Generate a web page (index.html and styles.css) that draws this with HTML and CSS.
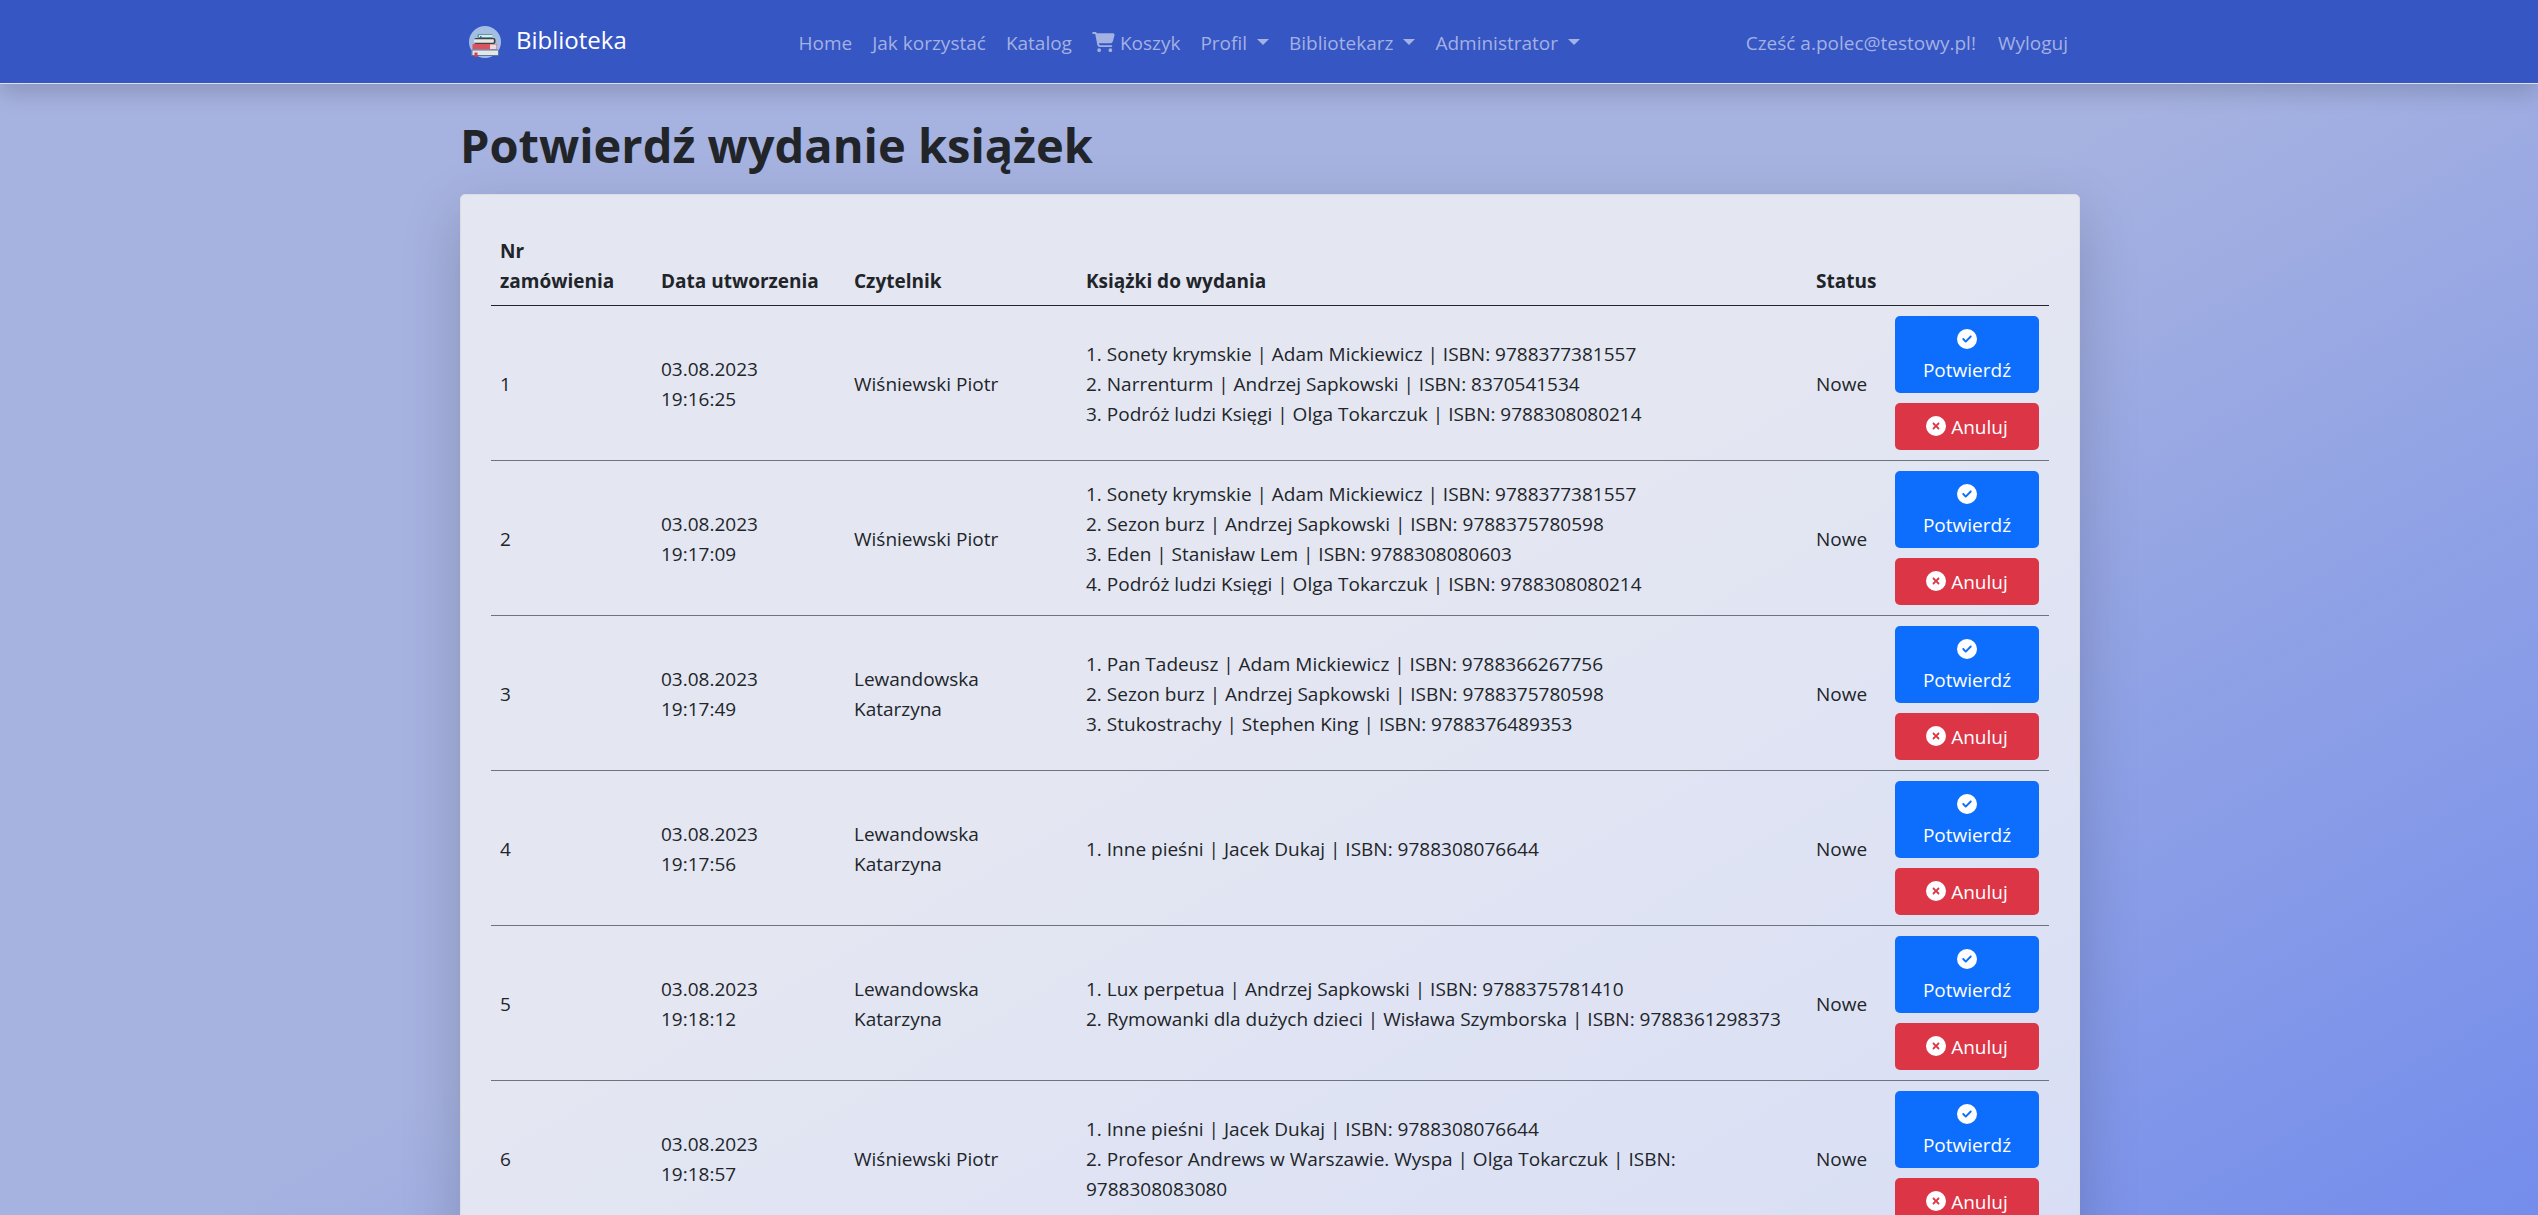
FILE: index.html
```html
<!DOCTYPE html>
<html lang="pl">
<head>
<meta charset="utf-8">
<title>Potwierdź wydanie książek - Biblioteka</title>
<link rel="stylesheet" href="styles.css">
</head>
<body>
<svg class="sprite" aria-hidden="true">
  <symbol id="check" viewBox="0 0 512 512"><path d="M256 512A256 256 0 1 0 256 0a256 256 0 1 0 0 512zM369 209L241 337c-9.400 9.400-24.600 9.400-33.900 0l-64-64c-9.400-9.400-9.400-24.600 0-33.900s24.600-9.400 33.900 0l47 47L335 175c9.400-9.400 24.600-9.400 33.900 0s9.400 24.600 0 33.900z"/></symbol>
  <symbol id="cross" viewBox="0 0 512 512"><path d="M256 512A256 256 0 1 0 256 0a256 256 0 1 0 0 512zM175 175c9.400-9.400 24.600-9.400 33.900 0l47 47 47-47c9.400-9.400 24.600-9.400 33.900 0s9.400 24.600 0 33.900l-47 47 47 47c9.400 9.400 9.400 24.600 0 33.900s-24.600 9.400-33.900 0l-47-47-47 47c-9.400 9.400-24.600 9.400-33.900 0s-9.400-24.600 0-33.900l47-47-47-47c-9.400-9.400-9.400-24.600 0-33.900z"/></symbol>
</svg>
<header class="topbar">
  <nav class="container navbar">
    <a class="brand" href="#">
      <svg class="logo" viewBox="0 0 34 34" aria-hidden="true">
        <circle cx="17" cy="17" r="16" fill="#a4bde2"/>
        <rect x="9.500" y="9" width="15" height="4" rx="1" fill="#5b9a9c"/><path d="M11 10h13.500v2H11z" fill="#dfe8e8"/><path d="M12 11h1.500v3H12z" fill="#2f6fb0"/>
        <rect x="6" y="13" width="21.500" height="6" rx="2" fill="#3f4347"/><path d="M6 14.200h19.500q1 1.800 0 3.600H6z" fill="#e6e6e6"/>
        <path d="M4.500 19H29v5.500H4.500z" fill="#d9545f"/><path d="M22 19.500h6.500v4.500H22z" fill="#e9dcdc"/>
        <rect x="3" y="24.500" width="28" height="6.500" rx="1.500" fill="#5779a5"/><path d="M4.500 25.500H30v4.500H4.500z" fill="#e6e6e6"/>
        <path d="M6.500 27.500h3v5l-1.500-1-1.500 1z" fill="#cf3f4d"/>
      </svg>
      <span class="brand-name">Biblioteka</span>
    </a>
    <ul class="menu">
      <li><a href="#">Home</a></li>
      <li><a href="#">Jak korzystać</a></li>
      <li><a href="#">Katalog</a></li>
      <li><a href="#"><svg class="cart" viewBox="0 0 576 512" aria-hidden="true"><path d="M0 24C0 10.700 10.700 0 24 0h45.500c22 0 41.500 12.800 50.600 32h411c26.300 0 45.500 25 38.600 50.400l-41 152.300c-8.500 31.400-37 53.300-69.500 53.300H170.700l5.400 28.500c2.200 11.300 12.100 19.500 23.600 19.500H488c13.300 0 24 10.700 24 24s-10.700 24-24 24H199.700c-34.600 0-64.300-24.600-70.700-58.500L77.400 54.500c-.7-3.800-4-6.500-7.900-6.500H24C10.700 48 0 37.300 0 24zM128 464a48 48 0 1 1 96 0 48 48 0 1 1-96 0zm336-48a48 48 0 1 1 0 96 48 48 0 1 1 0-96z"/></svg> Koszyk</a></li>
      <li><a class="dropdown" href="#">Profil</a></li>
      <li><a class="dropdown" href="#">Bibliotekarz</a></li>
      <li><a class="dropdown" href="#">Administrator</a></li>
    </ul>
    <ul class="menu account">
      <li><a href="#">Cześć a.polec@testowy.pl!</a></li>
      <li><a href="#">Wyloguj</a></li>
    </ul>
  </nav>
</header>
<main class="container">
  <h1>Potwierdź wydanie książek</h1>
  <section class="card">
    <table class="orders">
      <colgroup><col class="c-nr"><col class="c-date"><col class="c-reader"><col><col class="c-status"><col class="c-actions"></colgroup>
      <thead>
        <tr><th>Nr zamówienia</th><th>Data utworzenia</th><th>Czytelnik</th><th>Książki do wydania</th><th>Status</th><th></th></tr>
      </thead>
      <tbody>
        <tr><td>1</td><td>03.08.2023 19:16:25</td><td>Wiśniewski Piotr</td>
          <td>1. Sonety krymskie | Adam Mickiewicz | ISBN: 9788377381557<br>2. Narrenturm | Andrzej Sapkowski | ISBN: 8370541534<br>3. Podróż ludzi Księgi | Olga Tokarczuk | ISBN: 9788308080214</td>
          <td>Nowe</td>
          <td><div class="actions"><button class="btn confirm"><svg class="icon"><use href="#check"/></svg> Potwierdź</button><button class="btn cancel"><svg class="icon"><use href="#cross"/></svg> Anuluj</button></div></td></tr>
        <tr><td>2</td><td>03.08.2023 19:17:09</td><td>Wiśniewski Piotr</td>
          <td>1. Sonety krymskie | Adam Mickiewicz | ISBN: 9788377381557<br>2. Sezon burz | Andrzej Sapkowski | ISBN: 9788375780598<br>3. Eden | Stanisław Lem | ISBN: 9788308080603<br>4. Podróż ludzi Księgi | Olga Tokarczuk | ISBN: 9788308080214</td>
          <td>Nowe</td>
          <td><div class="actions"><button class="btn confirm"><svg class="icon"><use href="#check"/></svg> Potwierdź</button><button class="btn cancel"><svg class="icon"><use href="#cross"/></svg> Anuluj</button></div></td></tr>
        <tr><td>3</td><td>03.08.2023 19:17:49</td><td>Lewandowska Katarzyna</td>
          <td>1. Pan Tadeusz | Adam Mickiewicz | ISBN: 9788366267756<br>2. Sezon burz | Andrzej Sapkowski | ISBN: 9788375780598<br>3. Stukostrachy | Stephen King | ISBN: 9788376489353</td>
          <td>Nowe</td>
          <td><div class="actions"><button class="btn confirm"><svg class="icon"><use href="#check"/></svg> Potwierdź</button><button class="btn cancel"><svg class="icon"><use href="#cross"/></svg> Anuluj</button></div></td></tr>
        <tr><td>4</td><td>03.08.2023 19:17:56</td><td>Lewandowska Katarzyna</td>
          <td>1. Inne pieśni | Jacek Dukaj | ISBN: 9788308076644</td>
          <td>Nowe</td>
          <td><div class="actions"><button class="btn confirm"><svg class="icon"><use href="#check"/></svg> Potwierdź</button><button class="btn cancel"><svg class="icon"><use href="#cross"/></svg> Anuluj</button></div></td></tr>
        <tr><td>5</td><td>03.08.2023 19:18:12</td><td>Lewandowska Katarzyna</td>
          <td>1. Lux perpetua | Andrzej Sapkowski | ISBN: 9788375781410<br>2. Rymowanki dla dużych dzieci | Wisława Szymborska | ISBN: 9788361298373</td>
          <td>Nowe</td>
          <td><div class="actions"><button class="btn confirm"><svg class="icon"><use href="#check"/></svg> Potwierdź</button><button class="btn cancel"><svg class="icon"><use href="#cross"/></svg> Anuluj</button></div></td></tr>
        <tr><td>6</td><td>03.08.2023 19:18:57</td><td>Wiśniewski Piotr</td>
          <td>1. Inne pieśni | Jacek Dukaj | ISBN: 9788308076644<br>2. Profesor Andrews w Warszawie. Wyspa | Olga Tokarczuk | ISBN: 9788308083080</td>
          <td>Nowe</td>
          <td><div class="actions"><button class="btn confirm"><svg class="icon"><use href="#check"/></svg> Potwierdź</button><button class="btn cancel"><svg class="icon"><use href="#cross"/></svg> Anuluj</button></div></td></tr>
      </tbody>
    </table>
  </section>
</main>
</body>
</html>
```
FILE: styles.css
```css
* { box-sizing: border-box; }
html { scrollbar-width: none; }
body {
  margin: 0;
  font: 19px/30px "Segoe UI", "Open Sans", "Noto Sans", sans-serif;
  color: #212529;
  background: linear-gradient(150deg, #a6b2e0 50%, #748dec) fixed;
}
.sprite { display: none; }
.container { max-width: 1650px; margin: 0 auto; padding: 0 14px 0 16px; }
.topbar {
  background: #3656c3;
  border-bottom: 1px solid #dee2e6;
  box-shadow: 0 10px 20px rgba(0, 0, 0, 0.15);
}
.navbar { display: flex; align-items: center; justify-content: space-between; height: 83px; }
.brand { display: flex; align-items: center; gap: 14px; margin-right: 16px; padding-left: 8px; color: #fff; font-size: 24px; text-decoration: none; }
.brand-name { padding-bottom: 4px; }
.logo { width: 34px; height: 34px; }
.menu { display: flex; margin: 0; padding: 0; list-style: none; }
.account { gap: 2px; padding-right: 2px; }
.menu a { display: block; padding: 11px 10px 9px; color: #a3b1e3; text-decoration: none; }
.cart { width: 23px; height: 20px; fill: currentColor; vertical-align: -2px; }
.dropdown::after { content: ""; display: inline-block; margin-left: 10px; vertical-align: 5px; border: 6px solid transparent; border-top-color: currentColor; border-bottom: 0; }
h1 { margin: 29px 0 17px; font-size: 47px; line-height: 64px; font-weight: 700; }
.card {
  padding: 30px;
  border: 1px solid #dadde6;
  border-radius: 5px;
  background: rgba(255, 253, 250, 0.7);
  box-shadow: 0 20px 60px rgba(0, 0, 0, 0.18);
}
.orders { width: 100%; border-collapse: collapse; table-layout: fixed; }
.c-nr { width: 161px; }
.c-date { width: 193px; }
.c-reader { width: 232px; }
.c-status { width: 78px; }
.c-actions { width: 164px; }
th, td { padding: 11px 10px 9px 9px; text-align: left; border-bottom: 1px solid #6c757d; }
th { vertical-align: bottom; border-bottom-color: #212529; }
td:last-child { padding: 10px; }
.actions { display: flex; flex-direction: column; gap: 10px; }
.btn { width: 100%; padding: 9px 20px 8px; border: 0; border-radius: 5px; color: #fff; font: inherit; }
.confirm { background: #0d6efd; }
.cancel { background: #dc3545; }
.icon { width: 20px; height: 20px; fill: currentColor; vertical-align: -2px; }
```
